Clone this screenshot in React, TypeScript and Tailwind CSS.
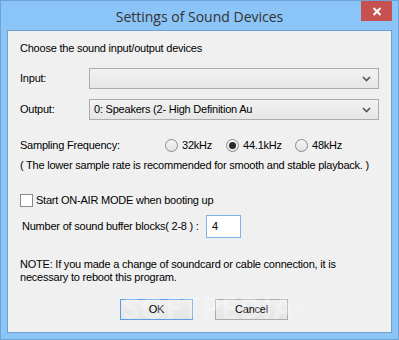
import React from "react";

const ui = { fontFamily: '"Liberation Sans", Arial, sans-serif' };

function Chevron() {
  return (
    <svg width="9" height="6" viewBox="0 0 9 6" className="shrink-0">
      <path d="M1 1 L4.5 4.5 L8 1" fill="none" stroke="#555" strokeWidth="1.6" />
    </svg>
  );
}

function Combo({ value }: { value?: string }) {
  return (
    <div className="flex h-[21px] w-[290px] items-center justify-between border border-[#acacac] bg-gradient-to-b from-[#f2f2f2] to-[#e6e6e6] pl-[4px] pr-[7px]">
      <span className="whitespace-nowrap">{value}</span>
      <Chevron />
    </div>
  );
}

function Radio({ label, checked, width }: { label: string; checked?: boolean; width: string }) {
  return (
    <div className={`flex shrink-0 items-center gap-[4px] ${width}`}>
      <div className="flex h-[13px] w-[13px] items-center justify-center rounded-full border border-[#8a8a8a] bg-gradient-to-b from-[#f4f4f4] to-[#e4e4e4]">
        {checked && <div className="h-[7px] w-[7px] rounded-full bg-[#2a2a2a]" />}
      </div>
      <span className="whitespace-nowrap">{label}</span>
    </div>
  );
}

export default function App() {
  return (
    <div className="flex h-[340px] w-[399px] flex-col border border-[#6fa3d6] bg-[#8bc4f6]" style={ui}>
      <div className="relative flex h-[29px] items-start justify-center">
        <span
          className="mt-[5px] text-[14px] text-[#333]"
          style={{ fontFamily: '"Open Sans", "Noto Sans", sans-serif' }}
        >
          Settings of Sound Devices
        </span>
        <div className="absolute right-[6px] top-0 flex h-[20px] w-[31px] items-center justify-center bg-[#c75050]">
          <svg width="10" height="9" viewBox="0 0 10 9">
            <path d="M1.5 1 L8.5 8 M8.5 1 L1.5 8" stroke="#fff" strokeWidth="2" />
          </svg>
        </div>
      </div>

      <div className="relative mx-[6px] mb-[6px] flex flex-1 flex-col whitespace-nowrap border border-[#6e9fd0] bg-[#f0f0f0] pl-[12px] pr-[12px] text-[11px] leading-[13px] tracking-[-0.22px] text-black">
        <div className="mt-[11px] h-[13px]">Choose the sound input/output devices</div>

        <div className="mt-[13px] flex items-center">
          <span className="w-[69px] shrink-0">Input:</span>
          <Combo />
        </div>

        <div className="mt-[10px] flex items-center">
          <span className="w-[69px] shrink-0">Output:</span>
          <Combo value="0: Speakers (2- High Definition Au" />
        </div>

        <div className="mt-[19px] flex h-[13px] items-center">
          <span className="w-[145px] shrink-0">Sampling Frequency:</span>
          <Radio label="32kHz" width="w-[61px]" />
          <Radio label="44.1kHz" checked width="w-[69px]" />
          <Radio label="48kHz" width="w-[60px]" />
        </div>

        <div className="mt-[7px] h-[13px]">
          ( The lower sample rate is recommended for smooth and stable playback. )
        </div>

        <div className="mt-[22px] flex h-[13px] items-center gap-[3px]">
          <div className="h-[13px] w-[13px] shrink-0 border border-[#8a8a8a] bg-white" />
          <span>Start ON-AIR MODE when booting up</span>
        </div>

        <div className="mt-[8px] flex items-center pl-[2px]">
          <span className="w-[184px] shrink-0">Number of sound buffer blocks( 2-8 ) :</span>
          <div className="flex h-[23px] w-[35px] items-center border border-[#7eb4ea] bg-white pl-[5px]">4</div>
        </div>

        <div className="mt-[20px]">
          <div>NOTE: If you made a change of soundcard or cable connection, it is</div>
          <div>necessary to reboot this program.</div>
        </div>

        <div className="mt-[15px] flex gap-[22px] pl-[100px]">
          <div className="flex h-[21px] w-[73px] items-center justify-center border border-[#5a9fe6] bg-gradient-to-b from-[#f0f0f0] to-[#e5e5e5]">
            OK
          </div>
          <div className="flex h-[21px] w-[73px] items-center justify-center border border-[#acacac] bg-gradient-to-b from-[#f0f0f0] to-[#e5e5e5]">
            Cancel
          </div>
        </div>

        <div
          className="pointer-events-none absolute left-[115px] top-[262px] text-[30px] font-bold leading-[30px] tracking-[1px] text-white/30"
          style={{ fontFamily: '"Open Sans", sans-serif' }}
        >
          SOFTPEDIA<span className="align-top text-[9px]">®</span>
        </div>
      </div>
    </div>
  );
}
